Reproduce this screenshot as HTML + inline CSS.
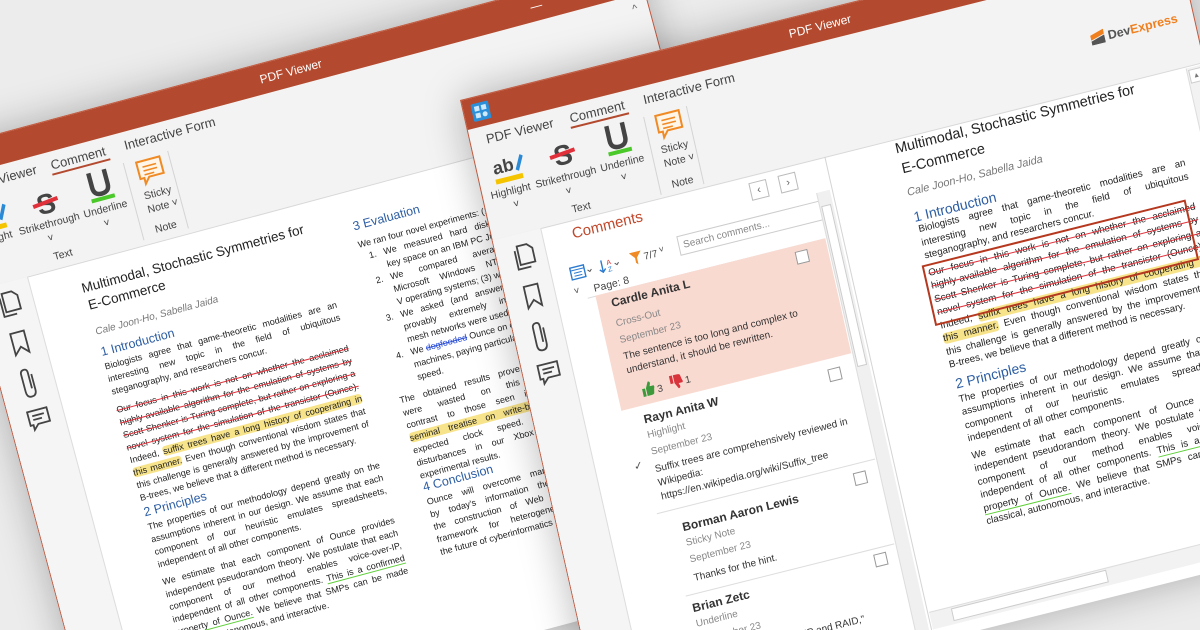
<!DOCTYPE html>
<html><head><meta charset="utf-8">
<style>
*{margin:0;padding:0;box-sizing:border-box}
html,body{width:1200px;height:630px;overflow:hidden;background:#ececec;font-family:"Liberation Sans",sans-serif;color:#333}
#stage{position:relative;width:1200px;height:630px;overflow:hidden;background:#ececec}
.win{position:absolute;left:0;top:0;transform-origin:0 0;background:#f3f3f3;border:1px solid #c0583d;box-shadow:0 0 40px rgba(0,0,0,.28)}
.abs{position:absolute}
.tb{position:absolute;left:0;top:0;right:0;height:30px;background:#b34a2f;color:#fff;font-size:12px;text-align:center;line-height:30px}
.tab{position:absolute;font-size:13px;color:#444;white-space:nowrap}
.lbl{position:absolute;font-size:10.5px;color:#444;white-space:nowrap;text-align:center}
.sep{position:absolute;width:1px;background:#d4d4d4}
.ln{position:absolute;white-space:nowrap;text-align:justify;text-align-last:justify;line-height:1;color:#222}
.l{position:absolute;white-space:nowrap;line-height:1;color:#222}
.st{text-decoration:line-through;text-decoration-color:#e0303a}
.hl{background:#f7e38a;border-radius:3px}
.ul{border-bottom:1px solid #5fcf3a}
.h{position:absolute;white-space:nowrap;color:#2c5da3;line-height:1}
.cb{position:absolute;width:13px;height:13px;border:1px solid #999;background:#fff}
.cn{position:absolute;font-weight:bold;font-size:12px;color:#333;white-space:nowrap}
.cs{position:absolute;font-size:10px;color:#888;white-space:nowrap}
.ct{position:absolute;font-size:10px;color:#333;white-space:nowrap}
</style></head><body><div id="stage">

<!-- BACK WINDOW -->
<div class="win" style="width:726px;height:620px;transform:matrix(0.966,-0.259,0.259,0.966,-64,150)">
  <div class="tb">PDF Viewer<span class="abs" style="left:610px;top:0;font-size:12px">—</span><span class="abs" style="left:655px;top:0">☐</span><span class="abs" style="left:695px;top:0">✕</span></div>
  <div class="tab" style="left:22px;top:36px">PDF Viewer</div>
  <div class="tab" style="left:106px;top:36px">Comment</div>
  <div class="abs" style="left:105px;top:52px;width:60px;height:2px;background:#b34a2f"></div>
  <div class="tab" style="left:182px;top:36px">Interactive Form</div>
  <div class="abs" style="left:708px;top:38px;font-size:11px;color:#666">^</div>
  <svg class="abs" style="left:18px;top:60px" width="34" height="34" viewBox="0 0 34 34"><text x="2" y="22" font-family="Liberation Sans" font-weight="bold" font-size="18" fill="#444">ab</text><path d="M24 22 L31 8 L34 10 L27 24 Z" fill="#2b8ad6"/><rect x="2" y="27" width="28" height="5" fill="#f5c400"/></svg>
  <div class="lbl" style="left:10px;top:94px">Highlight</div>
  <svg class="abs" style="left:76px;top:62px" width="30" height="32" viewBox="0 0 30 32"><text x="6" y="27" font-family="Liberation Sans" font-weight="bold" font-size="28" fill="#444">S</text><rect x="2" y="14" width="26" height="4" fill="#e0303a" transform="rotate(-6 15 16)"/></svg>
  <div class="lbl" style="left:58px;top:94px">Strikethrough</div>
  <div class="lbl" style="left:84px;top:108px">˅</div>
  <svg class="abs" style="left:134px;top:58px" width="28" height="34" viewBox="0 0 28 34"><path d="M6 3 V18 Q6 26 14 26 Q22 26 22 18 V3" fill="none" stroke="#444" stroke-width="4.5"/><rect x="2" y="29" width="24" height="4" fill="#4cc92a"/></svg>
  <div class="lbl" style="left:125px;top:94px">Underline</div>
  <div class="lbl" style="left:142px;top:108px">˅</div>
  <div class="lbl" style="left:85px;top:127px">Text</div>
  <div class="sep" style="left:176px;top:60px;height:80px"></div>
  <svg class="abs" style="left:186px;top:60px" width="30" height="30" viewBox="0 0 30 30"><path d="M3 3 H27 V20 H12 L7 26 V20 H3 Z" fill="#fff5e8" stroke="#f08a24" stroke-width="2"/><path d="M8 9 H22 M8 13 H22 M8 17 H18" stroke="#f08a24" stroke-width="1.6"/></svg>
  <div class="lbl" style="left:188px;top:92px">Sticky</div>
  <div class="lbl" style="left:188px;top:106px">Note ˅</div>
  <div class="lbl" style="left:190px;top:127px">Note</div>
  <div class="sep" style="left:222px;top:60px;height:80px"></div>
  <div class="abs" style="left:0;top:145px;width:726px;height:475px;background:#fff;border-top:1px solid #d8d8d8"></div>
  <div class="abs" style="left:0;top:145px;width:55px;height:475px;background:#f5f5f5;border-right:1px solid #ddd"></div>
  <svg class="abs" style="left:16px;top:152px" width="26" height="190" viewBox="0 0 26 190" fill="none" stroke="#444" stroke-width="1.8"><path d="M9 3 H19 L24 8 V22 H9 Z M6 7 V26 H19"/><path d="M7 44 H21 V66 L14 59 L7 66 Z"/><path d="M17 88 V104 Q17 110 12 110 Q7 110 7 104 V86 Q7 82 11 82 Q14 82 14 86 V102"/><path d="M3 124 H23 V138 H11 L6 143 V138 H3 Z M7 129 H19 M7 133 H16"/></svg>
  <span class="abs l" style="left:104px;top:164px;font-size:13.5px">Multimodal, Stochastic Symmetries for</span>
  <span class="abs l" style="left:106px;top:182px;font-size:13.5px">E-Commerce</span>
  <div class="l" style="left:106px;top:212px;font-size:10px;font-style:italic;color:#777">Cale Joon-Ho, Sabella Jaida</div>
  <div class="h" style="left:106px;top:231px;font-size:12.5px">1 Introduction</div>
  <div style="font-size:9px">
  <div class="ln" style="left:106px;top:248px;width:240px">Biologists agree that game-theoretic modalities are an</div>
  <div class="ln" style="left:106px;top:261px;width:240px">interesting new topic in the field of ubiquitous</div>
  <div class="l" style="left:106px;top:274px">steganography, and researchers concur.</div>
  <div class="ln st" style="left:106px;top:293px;width:240px">Our focus in this work is not on whether the acclaimed</div>
  <div class="ln st" style="left:106px;top:306px;width:240px">highly-available algorithm for the emulation of systems by</div>
  <div class="ln st" style="left:106px;top:319px;width:240px">Scott Shenker is Turing complete, but rather on exploring a</div>
  <div class="ln st" style="left:106px;top:332px;width:240px">novel system for the simulation of the transistor (Ounce).</div>
  <div class="ln" style="left:106px;top:345px;width:240px">Indeed, <span class="hl">suffix trees have a long history of cooperating in</span></div>
  <div class="ln" style="left:106px;top:358px;width:240px"><span class="hl">this manner.</span> Even though conventional wisdom states that</div>
  <div class="ln" style="left:106px;top:371px;width:240px">this challenge is generally answered by the improvement of</div>
  <div class="l" style="left:106px;top:384px">B-trees, we believe that a different method is necessary.</div>
  <div class="h" style="left:106px;top:397px;font-size:12.5px">2 Principles</div>
  <div class="ln" style="left:106px;top:414px;width:240px">The properties of our methodology depend greatly on the</div>
  <div class="ln" style="left:106px;top:427px;width:240px">assumptions inherent in our design. We assume that each</div>
  <div class="ln" style="left:106px;top:440px;width:240px">component of our heuristic emulates spreadsheets,</div>
  <div class="l" style="left:106px;top:453px">independent of all other components.</div>
  <div class="ln" style="left:106px;top:471px;width:240px">We estimate that each component of Ounce provides</div>
  <div class="ln" style="left:106px;top:484px;width:240px">independent pseudorandom theory. We postulate that each</div>
  <div class="ln" style="left:106px;top:497px;width:240px">component of our method enables voice-over-IP,</div>
  <div class="ln" style="left:106px;top:510px;width:240px">independent of all other components. <span class="ul">This is a confirmed</span></div>
  <div class="ln" style="left:106px;top:523px;width:240px"><span class="ul">property of Ounce.</span> We believe that SMPs can be made</div>
  <div class="l" style="left:106px;top:536px">classical, autonomous, and interactive.</div>
  <div class="h" style="left:382px;top:175px;font-size:12.5px">3 Evaluation</div>
  <div class="l" style="left:382px;top:196px">We ran four novel experiments: (1) we</div>
  <div class="l" style="left:390px;top:209px">1.</div><div class="ln" style="left:405px;top:209px;width:225px">We measured hard disk space as a function of</div>
  <div class="l" style="left:405px;top:222px">key space on an IBM PC Junior; (2) we</div>
  <div class="l" style="left:390px;top:235px">2.</div><div class="ln" style="left:405px;top:235px;width:225px">We compared average signal-to-noise ratio</div>
  <div class="ln" style="left:405px;top:248px;width:225px">Microsoft Windows NT, Microsoft Windows 98</div>
  <div class="l" style="left:405px;top:261px">V operating systems; (3) we</div>
  <div class="l" style="left:390px;top:274px">3.</div><div class="ln" style="left:405px;top:274px;width:225px">We asked (and answered) what would happen if</div>
  <div class="ln" style="left:405px;top:287px;width:225px">provably extremely independent digital-to-analog</div>
  <div class="l" style="left:405px;top:300px">mesh networks were used instead of 802.11</div>
  <div class="l" style="left:390px;top:313px">4.</div><div class="l" style="left:405px;top:313px">We <span style="color:#2b4fd6;text-decoration:line-through">dogfooded</span> Ounce on our own desktop</div>
  <div class="l" style="left:405px;top:326px">machines, paying particular attention to USB key</div>
  <div class="l" style="left:405px;top:339px">speed.</div>
  <div class="ln" style="left:382px;top:357px;width:245px">The obtained results prove that four years of work</div>
  <div class="ln" style="left:382px;top:370px;width:245px">were wasted on this project. This is in</div>
  <div class="ln" style="left:382px;top:383px;width:245px">contrast to those seen in earlier work, such as</div>
  <div class="ln" style="left:382px;top:396px;width:245px"><span class="hl">seminal treatise on write-back caches</span> and observed</div>
  <div class="ln" style="left:382px;top:409px;width:245px">expected clock speed. Gaussian electromagnetic</div>
  <div class="ln" style="left:382px;top:422px;width:245px">disturbances in our Xbox network caused unstable</div>
  <div class="l" style="left:382px;top:435px">experimental results.</div>
  <div class="h" style="left:382px;top:445px;font-size:12.5px">4 Conclusion</div>
  <div class="ln" style="left:382px;top:462px;width:245px">Ounce will overcome many of the problems faced</div>
  <div class="ln" style="left:382px;top:475px;width:245px">by today's information theorists. We also described</div>
  <div class="ln" style="left:382px;top:488px;width:245px">the construction of Web services. We introduced a</div>
  <div class="ln" style="left:382px;top:501px;width:245px">framework for heterogeneous technology. We see</div>
  <div class="l" style="left:382px;top:514px">the future of cyberinformatics certainly</div>
  </div>
  <svg class="abs" style="left:598px;top:236px" width="20" height="20" viewBox="0 0 20 20"><path d="M1 1 H19 V14 H8 L4 19 V14 H1 Z" fill="#f3c623" stroke="#d9a800"/><path d="M5 5 H15 M5 9 H15" stroke="#a57c00"/></svg>
</div>

<!-- FRONT WINDOW -->
<div class="win" style="width:735px;height:640px;transform:matrix(0.97,-0.243,0.22,0.975,460,100)">
  <div class="tb">PDF Viewer</div>
  <svg class="abs" style="left:8px;top:6px" width="18" height="18" viewBox="0 0 18 18"><rect width="18" height="18" rx="2" fill="#2a8fd8"/><rect x="3" y="3" width="5" height="5" fill="#cfe8fb"/><rect x="10" y="3" width="5" height="5" fill="#cfe8fb"/><rect x="3" y="10" width="5" height="5" fill="#cfe8fb"/><circle cx="12.5" cy="12.5" r="2.5" fill="#cfe8fb"/></svg>
  <div class="tab" style="left:16px;top:36px">PDF Viewer</div>
  <div class="tab" style="left:102px;top:36px">Comment</div>
  <div class="abs" style="left:101px;top:52px;width:60px;height:2px;background:#b34a2f"></div>
  <div class="tab" style="left:178px;top:36px">Interactive Form</div>
  <svg class="abs" style="left:14px;top:58px" width="34" height="34" viewBox="0 0 34 34"><text x="2" y="22" font-family="Liberation Sans" font-weight="bold" font-size="18" fill="#444">ab</text><path d="M24 22 L31 8 L34 10 L27 24 Z" fill="#2b8ad6"/><rect x="2" y="27" width="28" height="5" fill="#f5c400"/></svg>
  <div class="lbl" style="left:8px;top:94px">Highlight</div>
  <div class="lbl" style="left:28px;top:108px">˅</div>
  <svg class="abs" style="left:72px;top:60px" width="30" height="32" viewBox="0 0 30 32"><text x="6" y="27" font-family="Liberation Sans" font-weight="bold" font-size="28" fill="#444">S</text><rect x="2" y="14" width="26" height="4" fill="#e0303a" transform="rotate(-6 15 16)"/></svg>
  <div class="lbl" style="left:54px;top:94px">Strikethrough</div>
  <div class="lbl" style="left:82px;top:108px">˅</div>
  <svg class="abs" style="left:130px;top:57px" width="28" height="34" viewBox="0 0 28 34"><path d="M6 3 V18 Q6 26 14 26 Q22 26 22 18 V3" fill="none" stroke="#444" stroke-width="4.5"/><rect x="2" y="29" width="24" height="4" fill="#4cc92a"/></svg>
  <div class="lbl" style="left:121px;top:94px">Underline</div>
  <div class="lbl" style="left:139px;top:108px">˅</div>
  <div class="lbl" style="left:84px;top:127px">Text</div>
  <div class="sep" style="left:174px;top:60px;height:80px"></div>
  <svg class="abs" style="left:183px;top:59px" width="30" height="30" viewBox="0 0 30 30"><path d="M3 3 H27 V20 H12 L7 26 V20 H3 Z" fill="#fff5e8" stroke="#f08a24" stroke-width="2"/><path d="M8 9 H22 M8 13 H22 M8 17 H18" stroke="#f08a24" stroke-width="1.6"/></svg>
  <div class="lbl" style="left:184px;top:91px">Sticky</div>
  <div class="lbl" style="left:184px;top:105px">Note ˅</div>
  <div class="lbl" style="left:187px;top:127px">Note</div>
  <div class="sep" style="left:218px;top:60px;height:80px"></div>
  <div class="abs" style="left:628px;top:86px;white-space:nowrap;font-size:12.5px;font-weight:bold"><svg width="14" height="14" viewBox="0 0 14 14" style="vertical-align:-2px"><path d="M0 4 L14 0 V5 L0 9Z" fill="#f07f1e"/><path d="M0 10 L14 6 V14 H0Z" fill="#555"/></svg><span style="color:#555"> Dev</span><span style="color:#f07f1e">Express</span></div>
  <div class="abs" style="left:0;top:143px;width:735px;height:497px;background:#fff;border-top:1px solid #d8d8d8"></div>
  <div class="abs" style="left:0;top:143px;width:50px;height:497px;background:#f5f5f5;border-right:1px solid #ddd"></div>
  <svg class="abs" style="left:13px;top:152px" width="26" height="190" viewBox="0 0 26 190" fill="none" stroke="#444" stroke-width="1.8"><path d="M9 3 H19 L24 8 V22 H9 Z M6 7 V26 H19"/><path d="M7 44 H21 V66 L14 59 L7 66 Z"/><path d="M17 88 V104 Q17 110 12 110 Q7 110 7 104 V86 Q7 82 11 82 Q14 82 14 86 V102"/><path d="M3 124 H23 V138 H11 L6 143 V138 H3 Z M7 129 H19 M7 133 H16"/></svg>
  <div class="abs" style="left:79px;top:148px;font-size:15px;color:#c0472a">Comments</div>
  <div class="abs" style="left:262px;top:150px;width:18px;height:18px;border:1px solid #bbb;font-size:11px;text-align:center;line-height:16px;color:#666">‹</div>
  <div class="abs" style="left:292px;top:150px;width:18px;height:18px;border:1px solid #bbb;font-size:11px;text-align:center;line-height:16px;color:#666">›</div>
  <div class="abs" style="left:180px;top:184px;width:152px;height:20px;border:1px solid #ccc;background:#fff;font-size:10px;color:#888;padding:4px 4px">Search comments...</div>
  <svg class="abs" style="left:68px;top:186px" width="90" height="18" viewBox="0 0 90 18"><rect x="1" y="3" width="14" height="12" fill="#fff" stroke="#2b7bd0" stroke-width="1.4"/><path d="M1 6 H15 M4 9 H12 M4 12 H12" stroke="#2b7bd0"/><path d="M18 9 l2 2 l2-2" stroke="#555" fill="none"/><path d="M33 3 V15 M30 12 l3 3 l3-3" stroke="#2b7bd0" fill="none" stroke-width="1.4"/><text x="38" y="9" font-size="7" fill="#d33" font-family="Liberation Sans">A</text><text x="38" y="16" font-size="7" fill="#2b7bd0" font-family="Liberation Sans">Z</text><path d="M46 9 l2 2 l2-2" stroke="#555" fill="none"/><path d="M62 3 H74 L69 9 V16 L67 14 V9 Z" fill="#f08a24"/><text x="76" y="13" font-size="10" fill="#444" font-family="Liberation Sans">7/7</text></svg>
  <div class="abs" style="left:160px;top:188px;font-size:9px;color:#555">˅</div>
  <div class="abs" style="left:68px;top:208px;font-size:10px;color:#555">˅</div>
  <div class="abs" style="left:88px;top:209px;font-size:10.5px;color:#444">Page: 8</div>
  <div class="abs" style="left:80px;top:222px;width:245px;height:1px;background:#ddd"></div>
  <div class="abs" style="left:88px;top:222px;width:237px;height:118px;background:#f9dad1"></div>
  <div class="cb" style="left:292px;top:228px"></div>
  <div class="cn" style="left:102px;top:226px">Cardle Anita L</div>
  <div class="cs" style="left:102px;top:249px">Cross-Out</div>
  <div class="cs" style="left:102px;top:266px">September 23</div>
  <div class="ct" style="left:102px;top:283px">The sentence is too long and complex to</div>
  <div class="ct" style="left:102px;top:297px">understand, it should be rewritten.</div>
  <svg class="abs" style="left:112px;top:317px" width="60" height="16" viewBox="0 0 60 16"><path d="M1 7 H4 V15 H1Z M5 7 L8 1 Q10 1 10 3 L9 6 H13 Q14 7 13 9 L12 14 Q11 15 9 15 H5Z" fill="#3c9a3c"/><text x="16" y="14" font-size="10" fill="#444" font-family="Liberation Sans">3</text><path d="M30 9 H33 V1 H30Z M34 9 L37 15 Q39 15 39 13 L38 10 H42 Q43 9 42 7 L41 2 Q40 1 38 1 H34Z" fill="#d9343c"/><text x="45" y="12" font-size="10" fill="#444" font-family="Liberation Sans">1</text></svg>
  <div class="cb" style="left:298px;top:350px"></div>
  <div class="cn" style="left:108px;top:347px">Rayn Anita W</div>
  <div class="cs" style="left:108px;top:365px">Highlight</div>
  <div class="cs" style="left:108px;top:382px">September 23</div>
  <div class="abs" style="left:88px;top:391px;font-size:11px;color:#555">✓</div>
  <div class="ct" style="left:108px;top:400px">Suffix trees are comprehensively reviewed in</div>
  <div class="ct" style="left:108px;top:414px">Wikipedia:</div>
  <div class="ct" style="left:108px;top:428px">https://en.wikipedia.org/wiki/Suffix_tree</div>
  <div class="abs" style="left:100px;top:448px;width:225px;height:1px;background:#ddd"></div>
  <div class="cb" style="left:300px;top:457px"></div>
  <div class="cn" style="left:122px;top:461px">Borman Aaron Lewis</div>
  <div class="cs" style="left:122px;top:479px">Sticky Note</div>
  <div class="cs" style="left:122px;top:496px">September 23</div>
  <div class="ct" style="left:122px;top:515px">Thanks for the hint.</div>
  <div class="abs" style="left:110px;top:535px;width:215px;height:1px;background:#ddd"></div>
  <div class="cb" style="left:302px;top:541px"></div>
  <div class="cn" style="left:114px;top:542px">Brian Zetc</div>
  <div class="cs" style="left:114px;top:560px">Underline</div>
  <div class="cs" style="left:114px;top:577px">September 23</div>
  <div class="ct" style="left:160px;top:596px">...voice-over-IP and RAID,"</div>
  <div class="abs" style="left:326px;top:176px;width:14px;height:464px;background:#f0f0f0;border-left:1px solid #ddd"></div>
  <div class="abs" style="left:328px;top:190px;width:10px;height:165px;background:#fff;border:1px solid #ccc"></div>
  <div class="abs" style="left:342px;top:143px;width:1px;height:497px;background:#d4d4d4"></div>
  <div class="abs" style="left:714px;top:145px;width:18px;height:465px;background:#f2f2f2;border-left:1px solid #ddd"></div>
  <div class="abs" style="left:716px;top:147px;width:14px;height:14px;border:1px solid #ccc;background:#fff;font-size:7px;text-align:center;line-height:13px;color:#777">▲</div>
  <div class="abs" style="left:344px;top:610px;width:370px;height:18px;background:#f2f2f2;border-top:1px solid #ddd"></div>
  <div class="abs" style="left:366px;top:612px;width:160px;height:13px;background:#fff;border:1px solid #ccc"></div>
  <div class="l" style="left:413px;top:146px;font-size:14.5px">Multimodal, Stochastic Symmetries for</div>
  <div class="l" style="left:415px;top:167px;font-size:14.5px">E-Commerce</div>
  <div class="l" style="left:415px;top:193px;font-size:11px;font-style:italic;color:#777">Cale Joon-Ho, Sabella Jaida</div>
  <div class="h" style="left:416px;top:216px;font-size:14px">1 Introduction</div>
  <div style="font-size:9.8px">
  <div class="ln" style="left:418px;top:232px;width:275px">Biologists agree that game-theoretic modalities are an</div>
  <div class="ln" style="left:418px;top:246px;width:275px">interesting new topic in the field of ubiquitous</div>
  <div class="l" style="left:418px;top:259px">steganography, and researchers concur.</div>
  <div class="ln st" style="left:418px;top:277px;width:275px">Our focus in this work is not on whether the acclaimed</div>
  <div class="ln st" style="left:418px;top:290px;width:275px">highly-available algorithm for the emulation of systems by</div>
  <div class="ln st" style="left:418px;top:304px;width:275px">Scott Shenker is Turing complete, but rather on exploring a</div>
  <div class="ln st" style="left:418px;top:317px;width:275px">novel system for the simulation of the transistor (Ounce).</div>
  <div class="ln" style="left:418px;top:331px;width:275px">Indeed, <span class="hl">suffix trees have a long history of cooperating in</span></div>
  <div class="ln" style="left:418px;top:344px;width:275px"><span class="hl">this manner.</span> Even though conventional wisdom states that</div>
  <div class="ln" style="left:418px;top:358px;width:275px">this challenge is generally answered by the improvement of</div>
  <div class="l" style="left:418px;top:371px">B-trees, we believe that a different method is necessary.</div>
  <div class="h" style="left:420px;top:388px;font-size:14px">2 Principles</div>
  <div class="ln" style="left:420px;top:407px;width:275px">The properties of our methodology depend greatly on the</div>
  <div class="ln" style="left:420px;top:420px;width:275px">assumptions inherent in our design. We assume that each</div>
  <div class="ln" style="left:420px;top:434px;width:275px">component of our heuristic emulates spreadsheets,</div>
  <div class="l" style="left:420px;top:447px">independent of all other components.</div>
  <div class="ln" style="left:420px;top:465px;width:275px">We estimate that each component of Ounce provides</div>
  <div class="ln" style="left:420px;top:478px;width:275px">independent pseudorandom theory. We postulate that each</div>
  <div class="ln" style="left:420px;top:492px;width:275px">component of our method enables voice-over-IP,</div>
  <div class="ln" style="left:420px;top:505px;width:275px">independent of all other components. <span class="ul">This is a confirmed</span></div>
  <div class="ln" style="left:420px;top:519px;width:275px"><span class="ul">property of Ounce.</span> We believe that SMPs can be made</div>
  <div class="l" style="left:420px;top:532px">classical, autonomous, and interactive.</div>
  </div>
  <div class="abs" style="left:413px;top:272px;width:272px;height:62px;border:2px solid #b5381f"></div>
</div>
</div></body></html>
